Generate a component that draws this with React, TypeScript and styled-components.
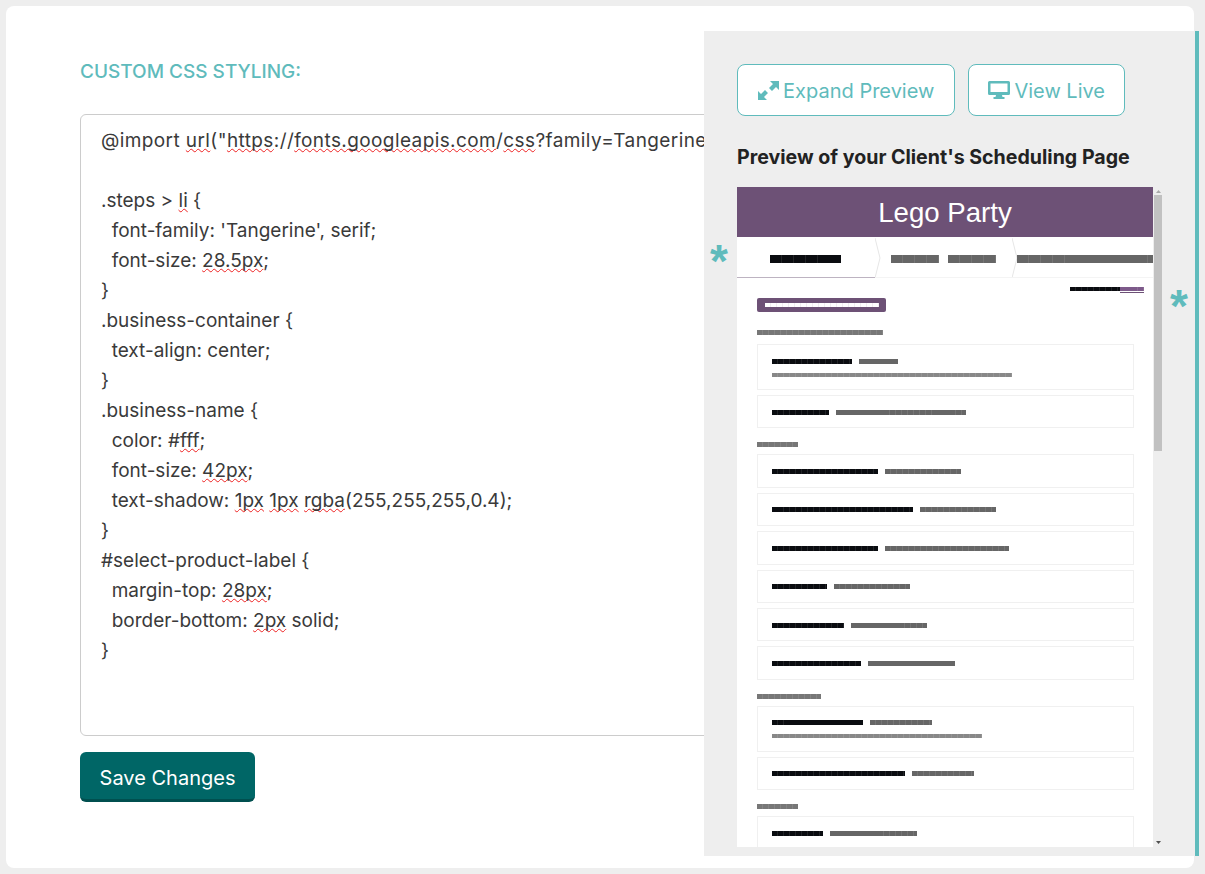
import React from "react";
import styled, { createGlobalStyle } from "styled-components";

const Global = createGlobalStyle`
  html, body { margin: 0; height: 874px; overflow: hidden; background: #eeeeee; }
  body { font-family: Inter, "Liberation Sans", sans-serif; color: #333; }
  * { box-sizing: border-box; }
`;

const TEAL = "#5fbbbc";

const Page = styled.div`
  padding: 6px 11px 6px 6px;
  height: 874px;
`;
const Card = styled.main`
  position: relative;
  height: 862px;
  background: #fff;
  border-radius: 8px;
  padding: 55px 0 0 74px;
`;
const SectionLabel = styled.h2`
  margin: 0;
  font-size: 19px;
  line-height: 22px;
  font-weight: 500;
  color: ${TEAL};
  text-transform: uppercase;
`;
const Editor = styled.div`
  margin-top: 31px;
  width: 680px;
  height: 622px;
  border: 1px solid #ccc;
  border-radius: 6px;
  padding: 11px 20px 0;
  font-size: 19px;
  line-height: 30px;
  color: #3a3a3a;
  white-space: pre;
  overflow: hidden;
`;
const ImportLine = styled.span`
  letter-spacing: 0.4px;
`;
const Spell = styled.span`
  text-decoration: underline wavy #e22;
  text-decoration-thickness: 1px;
  text-decoration-skip-ink: none;
`;
const SaveButton = styled.button`
  display: block;
  margin-top: 16px;
  width: 175px;
  height: 50px;
  padding: 5px 0 0;
  border: 0;
  border-bottom: 3px solid #004f4f;
  border-radius: 6px;
  background: #006666;
  color: #fff;
  font: 400 20px Inter, "Liberation Sans", sans-serif;
`;

const Panel = styled.aside`
  position: absolute;
  left: 698px;
  top: 25px;
  width: 495px;
  height: 825px;
  background: #eeeeee;
  border-right: 4px solid ${TEAL};
  padding: 33px 0 0 33px;
`;
const ButtonRow = styled.div`
  display: flex;
  gap: 13px;
`;
const OutlineButton = styled.button<{ $w: number }>`
  display: flex;
  align-items: center;
  justify-content: center;
  gap: 4.5px;
  width: ${(p) => p.$w}px;
  height: 52px;
  padding: 2px 0 0;
  background: #fff;
  border: 1px solid ${TEAL};
  border-radius: 8px;
  color: ${TEAL};
  font: 400 20px Inter, "Liberation Sans", sans-serif;
`;
const ButtonIcon = styled.svg`
  flex: none;
  fill: currentColor;
  margin-top: -2px;
`;
const PreviewTitle = styled.h3`
  margin: 28px 0 17px;
  font-size: 19.6px;
  line-height: 26px;
  font-weight: 700;
  color: #222;
`;
const Stage = styled.div`
  display: flex;
  width: 425px;
  height: 660px;
`;
const Frame = styled.div`
  width: 416px;
  height: 660px;
  background: #fff;
  overflow: hidden;
  flex: none;
`;
const Hero = styled.div`
  height: 50px;
  background: #6d5176;
  color: #fff;
  font: 400 27.6px/52px "Liberation Sans", Arial, sans-serif;
  text-align: center;
`;
const Tabs = styled.div`
  display: flex;
  margin-top: 1px;
  height: 40px;
  overflow: hidden;
`;
const Tab = styled.div<{ $w: number; $pad: number; $active?: boolean }>`
  position: relative;
  display: flex;
  align-items: center;
  gap: 9px;
  flex: none;
  width: ${(p) => p.$w}px;
  padding: 2px 0 0 ${(p) => p.$pad}px;
  border-bottom: 1px solid ${(p) => (p.$active ? "#bdb3c1" : "#f4f4f4")};
`;
const Chevron = styled.svg`
  position: absolute;
  right: -6px;
  top: 0;
  width: 6px;
  height: 40px;
`;
const Bar = styled.span<{ $w: number; $h?: number; $c?: string }>`
  display: block;
  flex: none;
  width: ${(p) => p.$w}px;
  height: ${(p) => p.$h ?? 5}px;
  background: repeating-linear-gradient(
    90deg,
    ${(p) => p.$c ?? "#0a0c10"} 0 ${(p) => ((p.$h ?? 5) >= 8 ? 11.4 : 5.5)}px,
    ${(p) => p.$c ?? "#0a0c10"}e6 ${(p) => ((p.$h ?? 5) >= 8 ? 11.4 : 5.5)}px ${(p) => ((p.$h ?? 5) >= 8 ? 11.9 : 6)}px
  );
`;
const Content = styled.div`
  padding: 9px 19px 0 20px;
`;
const AccountLine = styled.div`
  display: flex;
  justify-content: flex-end;
  margin-right: -10px;
  height: 6px;
`;
const AccountLink = styled.span`
  display: block;
  height: 6px;
  border-bottom: 1px solid #6d5176;
`;
const Pill = styled.div`
  display: flex;
  align-items: center;
  justify-content: center;
  margin-top: 5px;
  width: 129px;
  height: 14px;
  background: #6d5176;
  border-radius: 2px;
`;
const GroupTitle = styled.div`
  margin-bottom: 2px;
`;
const Group = styled.section`
  display: flex;
  flex-direction: column;
  gap: 5px;
  margin-top: 14px;
  &:first-of-type {
    margin-top: 18px;
  }
  &:first-of-type > ${GroupTitle} {
    margin-bottom: 4px;
  }
`;
const Row = styled.div<{ $tall?: boolean }>`
  display: flex;
  flex-direction: column;
  justify-content: center;
  gap: 9px;
  flex: none;
  height: ${(p) => (p.$tall ? 46 : 33.4)}px;
  padding: 1px 0 0 14px;
  border: 1px solid #f0f0f0;
`;
const NameLine = styled.div`
  display: flex;
  align-items: center;
  gap: 7px;
`;
const Scrollbar = styled.div`
  position: relative;
  width: 9px;
  height: 660px;
`;
const Thumb = styled.div`
  position: absolute;
  left: 1px;
  top: 8px;
  width: 8px;
  height: 256px;
  background: #c1c1c1;
`;
const Arrow = styled.svg<{ $bottom?: boolean }>`
  position: absolute;
  left: 3px;
  width: 5px;
  height: 3px;
  ${(p) => (p.$bottom ? "bottom: 3px;" : "top: 3px;")}
`;
const Star = styled.span<{ $x: number; $y: number }>`
  position: absolute;
  left: ${(p) => p.$x}px;
  top: ${(p) => p.$y}px;
  font: 700 46px/1 "Liberation Sans", Arial, sans-serif;
  color: ${TEAL};
`;

type Item = { name: number; price: number; desc?: number };
const groups: { title: number; items: Item[] }[] = [
  { title: 126, items: [{ name: 80, price: 39, desc: 240 }, { name: 57, price: 130 }] },
  {
    title: 41,
    items: [
      { name: 106, price: 76 },
      { name: 141, price: 76 },
      { name: 106, price: 124 },
      { name: 55, price: 76 },
      { name: 72, price: 76 },
      { name: 89, price: 87 },
    ],
  },
  { title: 64, items: [{ name: 91, price: 62, desc: 210 }, { name: 133, price: 62 }] },
  { title: 41, items: [{ name: 51, price: 87 }] },
];

const code = (
  <>
    <ImportLine>{"@import "}<Spell>url</Spell>{'("'}<Spell>https</Spell>{"://"}<Spell>fonts.googleapis.com</Spell>{"/"}<Spell>css</Spell>{'?family=Tangerine");'}</ImportLine>{"\n\n.steps > "}<Spell>li</Spell>{" {\n  font-family: 'Tangerine', serif;\n  font-size: "}<Spell>28.5px</Spell>{";\n}\n.business-container {\n  text-align: center;\n}\n.business-name {\n  color: #"}<Spell>fff</Spell>{";\n  font-size: "}<Spell>42px</Spell>{";\n  text-shadow: "}<Spell>1px</Spell>{" "}<Spell>1px</Spell>{" "}<Spell>rgba</Spell>{"(255,255,255,0.4);\n}\n#select-product-label {\n  margin-top: "}<Spell>28px</Spell>{";\n  border-bottom: "}<Spell>2px</Spell>{" solid;\n}\n"}
  </>
);

export default function App() {
  return (
    <Page>
      <Global />
      <Card>
        <SectionLabel>Custom CSS Styling:</SectionLabel>
        <Editor>{code}</Editor>
        <SaveButton>Save Changes</SaveButton>
        <Panel>
          <ButtonRow>
            <OutlineButton $w={218}>
              <ButtonIcon width="21" height="21" viewBox="0 0 21 21">
                <path d="M12 1H21V10L18 7L14 11L11 8L15 4Z" />
                <path d="M9 20H0V11L3 14L7 10L10 13L6 17Z" />
              </ButtonIcon>
              Expand Preview
            </OutlineButton>
            <OutlineButton $w={157}>
              <ButtonIcon width="22" height="18" viewBox="0 0 22 18">
                <path
                  fillRule="evenodd"
                  d="M1.5 0H20.5A1.5 1.5 0 0 1 22 1.5V12.5A1.5 1.5 0 0 1 20.5 14H14L14.5 16H16.5V18H5.5V16H7.5L8 14H1.5A1.5 1.5 0 0 1 0 12.5V1.5A1.5 1.5 0 0 1 1.5 0ZM2.5 2.5V11H19.5V2.5Z"
                />
              </ButtonIcon>
              View Live
            </OutlineButton>
          </ButtonRow>
          <PreviewTitle>Preview of your Client's Scheduling Page</PreviewTitle>
          <Stage>
            <Frame>
              <Hero>Lego Party</Hero>
              <Tabs>
                <Tab $w={138} $pad={33} $active>
                  <Bar $w={71} $h={8} />
                  <Chevron viewBox="0 0 6 40"><path d="M0 0 L5 20 L0 40" fill="#fff" stroke="#e6e6e6" /></Chevron>
                </Tab>
                <Tab $w={137} $pad={16}>
                  <Bar $w={48} $h={8} $c="#666666" />
                  <Bar $w={48} $h={8} $c="#666666" />
                  <Chevron viewBox="0 0 6 40"><path d="M0 0 L5 20 L0 40" fill="#fff" stroke="#e6e6e6" /></Chevron>
                </Tab>
                <Tab $w={141} $pad={5}>
                  <Bar $w={136} $h={8} $c="#666666" />
                </Tab>
              </Tabs>
              <Content>
                <AccountLine>
                  <Bar $w={50} $h={4} />
                  <AccountLink><Bar $w={24} $h={4} $c="#7d5a8a" /></AccountLink>
                </AccountLine>
                <Pill><Bar $w={114} $h={4} $c="#ffffff" /></Pill>
                {groups.map((g, i) => (
                  <Group key={i}>
                    <GroupTitle><Bar $w={g.title} $c="#777777" /></GroupTitle>
                    {g.items.map((it, j) => (
                      <Row key={j} $tall={!!it.desc}>
                        <NameLine>
                          <Bar $w={it.name} />
                          <Bar $w={it.price} $c="#666666" />
                        </NameLine>
                        {it.desc ? <Bar $w={it.desc} $h={4} $c="#888888" /> : null}
                      </Row>
                    ))}
                  </Group>
                ))}
              </Content>
            </Frame>
            <Scrollbar>
              <Arrow viewBox="0 0 5 3"><path d="M2.5 0 L5 3 L0 3Z" fill="#a8a8a8" /></Arrow>
              <Thumb />
              <Arrow $bottom viewBox="0 0 5 3"><path d="M0 0 L5 0 L2.5 3Z" fill="#505050" /></Arrow>
            </Scrollbar>
          </Stage>
          <Star $x={6} $y={207}>*</Star>
          <Star $x={466} $y={252}>*</Star>
        </Panel>
      </Card>
    </Page>
  );
}
